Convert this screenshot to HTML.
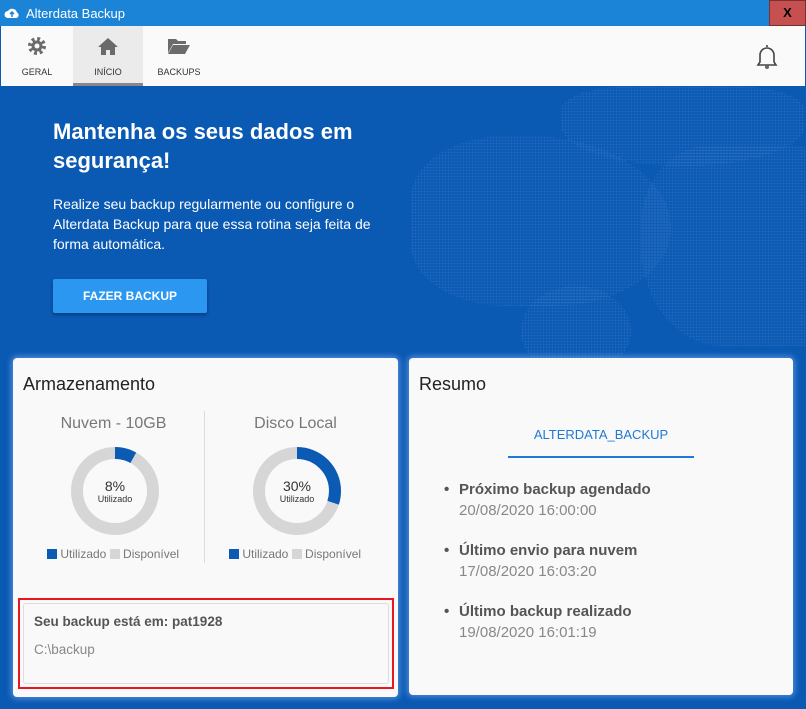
<!DOCTYPE html><html><head><style>
*{margin:0;padding:0;box-sizing:border-box}
body{width:806px;height:709px;overflow:hidden;font-family:"Liberation Sans",sans-serif;background:#0b5ab4;position:relative}
.title{position:absolute;left:0;top:0;width:806px;height:26px;background:#1b84d7;color:#fff;font-size:13px}
.title span{position:absolute;left:26px;top:6px}
.close{position:absolute;left:769px;top:0;width:37px;height:26px;background:#c65050;border:1px solid #7a3030;color:#000;font-weight:bold;font-size:13px;text-align:center;line-height:24px}
.tb{position:absolute;left:1px;top:26px;width:804px;height:60px;background:#fafafa}
.tab{position:absolute;top:0;height:60px;text-align:center;font-size:9px;color:#333}
.tab .l{position:absolute;top:41px;width:100%}
.main{position:absolute;left:1px;top:86px;width:804px;height:622px;background:#0a59b3}
.dots{position:absolute;background-image:radial-gradient(circle,#2a6fc0 0.8px,transparent 1px);background-size:3px 3px;opacity:.7}
.card{position:absolute;background:#f9f9f9;border-radius:4px;box-shadow:0 0 6px 2px rgba(120,170,240,.6)}
h1{position:absolute;left:53px;top:117px;color:#fff;font-size:22px;line-height:29px;font-weight:bold}
.p{position:absolute;left:53px;top:194px;color:#fff;font-size:14px;line-height:20px}
.btn{position:absolute;left:53px;top:279px;width:154px;height:34px;background:#2b97f0;color:#fff;font-size:12px;font-weight:bold;text-align:center;line-height:34px;border-radius:2px;box-shadow:0 2px 3px rgba(0,0,0,.3)}
.g{color:#777}
</style></head><body>
<div class="title"><svg style="position:absolute;left:4px;top:5px" width="16" height="16"><path d="M4 13a3.5 3.5 0 0 1 0-7 5 5 0 0 1 9 1.5A3 3 0 0 1 12.5 13z" fill="#fff"/><path d="M8 12V7M6 9l2-2 2 2" stroke="#1b84d7" stroke-width="1.5" fill="none"/></svg><span>Alterdata Backup</span></div>
<div class="close">X</div>
<div class="tb">
<div class="tab" style="left:1px;width:70px"><svg style="margin-top:10px" width="20" height="20" viewBox="0 0 20 20"><circle cx="10" cy="10" r="6.5" fill="none" stroke="#6b6b6b" stroke-width="5" stroke-dasharray="2.6 2.5"/><circle cx="10" cy="10" r="5.5" fill="#6b6b6b"/><circle cx="10" cy="10" r="2.5" fill="#fafafa"/></svg><div class="l">GERAL</div></div>
<div class="tab" style="left:72px;width:70px;background:#ebebeb;border-bottom:3px solid #888"><svg style="margin-top:10px" width="22" height="20" viewBox="0 0 22 20"><path d="M11 2L1 11h3v8h5v-5h4v5h5v-8h3z" fill="#6b6b6b"/></svg><div class="l">INÍCIO</div></div>
<div class="tab" style="left:143px;width:70px"><svg style="margin-top:10px" width="24" height="20" viewBox="0 0 24 20"><path d="M1 3h8l2 2h8v3H6L1 17z" fill="#6b6b6b"/><path d="M6 9h17l-5 9H1z" fill="#6b6b6b"/></svg><div class="l">BACKUPS</div></div>
<svg style="position:absolute;left:753px;top:17px" width="26" height="28" viewBox="0 0 26 28"><path d="M13 2v2M6 19V12a7 7 0 0 1 14 0v7l2 3H4z" fill="none" stroke="#444" stroke-width="1.6"/><circle cx="13" cy="24" r="2" fill="#666"/></svg>
</div>
<div class="main">
<div class="dots" style="left:410px;top:50px;width:260px;height:170px;border-radius:40% 60% 50% 40%"></div>
<div class="dots" style="left:560px;top:0;width:244px;height:80px;border-radius:30% 30% 50% 50%"></div>
<div class="dots" style="left:640px;top:60px;width:164px;height:200px;border-radius:40% 0 0 50%"></div>
<div class="dots" style="left:520px;top:200px;width:110px;height:90px;border-radius:50%"></div>
</div>
<h1>Mantenha os seus dados em<br>segurança!</h1>
<div class="p">Realize seu backup regularmente ou configure o<br>Alterdata Backup para que essa rotina seja feita de<br>forma automática.</div>
<div class="btn">FAZER BACKUP</div>
<div class="card" style="left:13px;top:358px;width:385px;height:339px">
<div style="position:absolute;left:10px;top:16px;font-size:18px;color:#222">Armazenamento</div>
<div style="position:absolute;left:191px;top:53px;width:1px;height:152px;background:#ddd"></div>
<div class="g" style="position:absolute;left:0;top:57px;width:201px;text-align:center;font-size:16px">Nuvem - 10GB</div>
<div class="g" style="position:absolute;left:191px;top:57px;width:183px;text-align:center;font-size:16px">Disco Local</div>
<svg style="position:absolute;left:57px;top:88px" width="90" height="90" viewBox="0 0 90 90"><circle cx="45" cy="45" r="38" fill="none" stroke="#d6d6d6" stroke-width="12"/><circle cx="45" cy="45" r="38" fill="none" stroke="#0b5ab4" stroke-width="12" stroke-dasharray="19.1 300" transform="rotate(-90 45 45)"/></svg>
<svg style="position:absolute;left:239px;top:88px" width="90" height="90" viewBox="0 0 90 90"><circle cx="45" cy="45" r="38" fill="none" stroke="#d6d6d6" stroke-width="12"/><circle cx="45" cy="45" r="38" fill="none" stroke="#0b5ab4" stroke-width="12" stroke-dasharray="71.6 300" transform="rotate(-90 45 45)"/></svg>
<div style="position:absolute;left:57px;top:120px;width:90px;text-align:center;font-size:14px;color:#333">8%<div style="font-size:9px">Utilizado</div></div>
<div style="position:absolute;left:239px;top:120px;width:90px;text-align:center;font-size:14px;color:#333">30%<div style="font-size:9px">Utilizado</div></div>
<div class="g" style="position:absolute;left:34px;top:189px;font-size:12px"><span style="display:inline-block;width:10px;height:10px;background:#0b5ab4;vertical-align:-1px"></span> Utilizado <span style="display:inline-block;width:10px;height:10px;background:#d6d6d6;vertical-align:-1px"></span> Disponível</div>
<div class="g" style="position:absolute;left:216px;top:189px;font-size:12px"><span style="display:inline-block;width:10px;height:10px;background:#0b5ab4;vertical-align:-1px"></span> Utilizado <span style="display:inline-block;width:10px;height:10px;background:#d6d6d6;vertical-align:-1px"></span> Disponível</div>
<div style="position:absolute;left:5px;top:240px;width:376px;height:91px;border:2px solid #e8161e"><div style="position:absolute;left:3px;top:3px;width:366px;height:81px;border:1px solid #ddd;border-radius:3px"></div>
<div style="position:absolute;left:14px;top:14px;font-size:13.5px;font-weight:bold;color:#555">Seu backup está em: pat1928</div>
<div style="position:absolute;left:14px;top:42px;font-size:13.5px;color:#888">C:\backup</div></div>
</div>
<div class="card" style="left:409px;top:358px;width:384px;height:337px">
<div style="position:absolute;left:10px;top:16px;font-size:18px;color:#222">Resumo</div>
<div style="position:absolute;left:99px;top:69px;width:186px;text-align:center;font-size:13px;color:#1e7ad6">ALTERDATA_BACKUP</div>
<div style="position:absolute;left:99px;top:98px;width:186px;height:2px;background:#1e7ad6"></div>
<div style="position:absolute;left:35px;top:121px;font-size:15px;line-height:21px">
<div style="margin-bottom:19px"><b style="color:#555"><span style="display:inline-block;width:15px">•</span>Próximo backup agendado</b><div class="g" style="padding-left:15px;color:#888">20/08/2020 16:00:00</div></div>
<div style="margin-bottom:19px"><b style="color:#555"><span style="display:inline-block;width:15px">•</span>Último envio para nuvem</b><div class="g" style="padding-left:15px;color:#888">17/08/2020 16:03:20</div></div>
<div><b style="color:#555"><span style="display:inline-block;width:15px">•</span>Último backup realizado</b><div class="g" style="padding-left:15px;color:#888">19/08/2020 16:01:19</div></div>
</div></div>
</body></html>
